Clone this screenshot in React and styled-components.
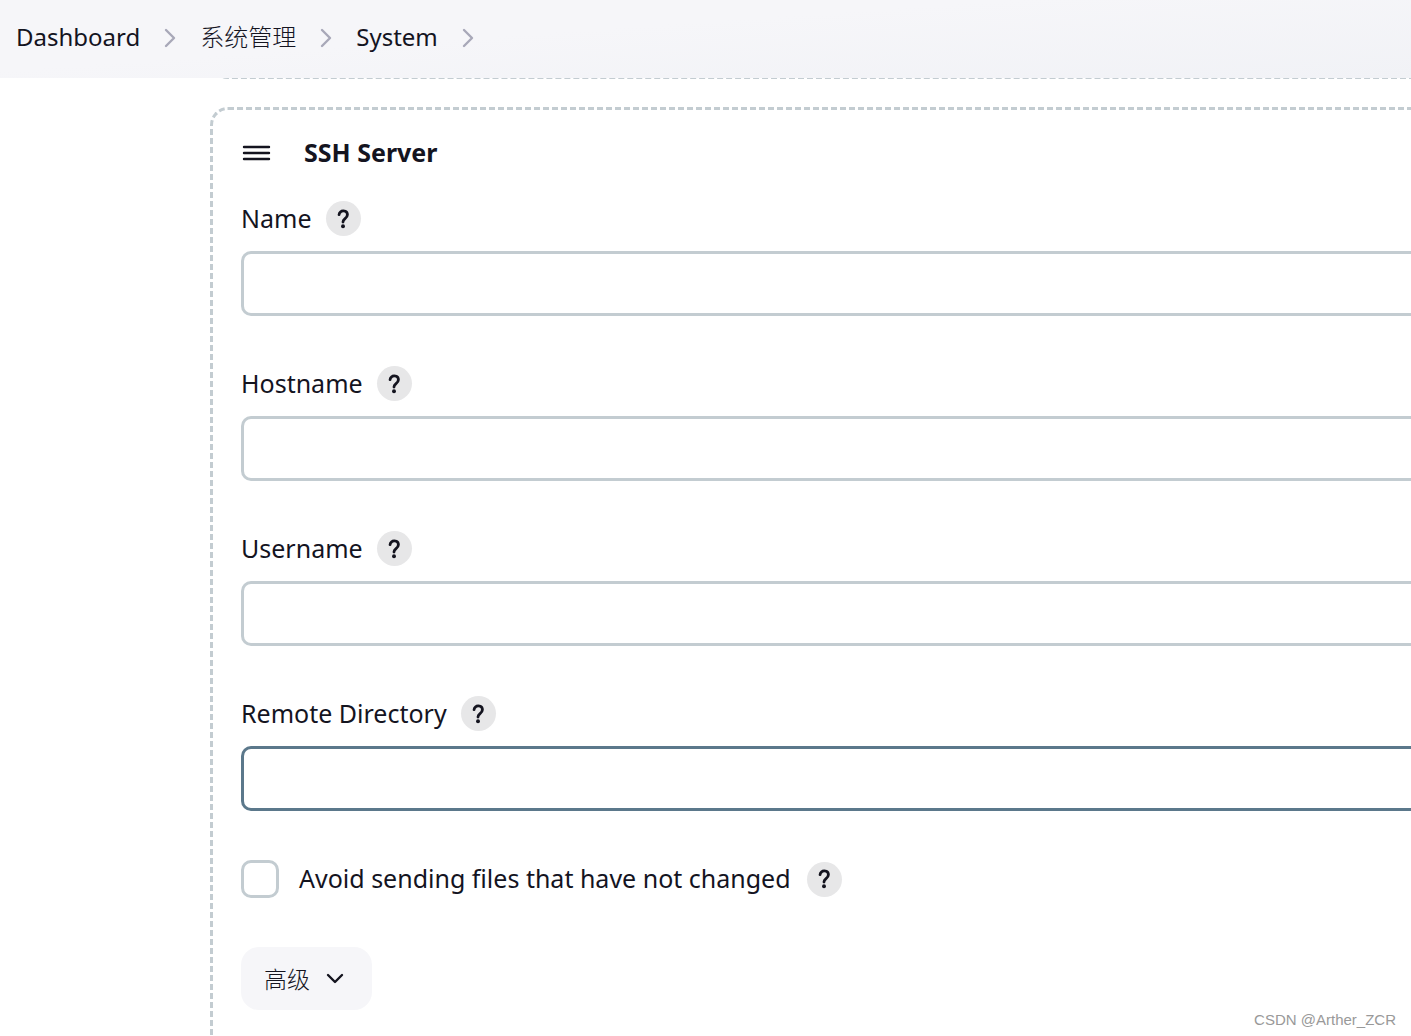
import React from "react";
import styled, { createGlobalStyle } from "styled-components";

const GlobalStyle = createGlobalStyle`
  *, *::before, *::after { box-sizing: border-box; }
  body {
    margin: 0;
    background: #fff;
    color: #14141f;
    font-family: "Noto Sans", "Noto Sans CJK SC", sans-serif;
    font-size: 25px;
    line-height: 36px;
  }
`;

const Page = styled.div`
  position: relative;
  display: flex;
  flex-direction: column;
  min-height: 100vh;
  overflow: hidden;
`;

const Breadcrumbs = styled.nav`
  position: relative;
  z-index: 1;
  display: flex;
  align-items: center;
  height: 78px;
  padding: 0 16px 4px;
  font-size: 24px;
  background: linear-gradient(176deg, #f6f6f9 40%, #f1f2f6);
`;

const Crumb = styled.a`
  color: inherit;
  font-weight: ${(p) => (p.lang === "zh" ? 300 : 400)};
  text-decoration: none;
`;

const CrumbArrow = styled.svg`
  width: 12px;
  height: 20px;
  margin: 2px 24px 0;
  flex: none;
`;

const Content = styled.main`
  flex: 1;
  display: flex;
  flex-direction: column;
  gap: 28px;
  margin-left: 210px;
`;

const Panel = styled.section`
  flex: 1;
  padding: 25px 0 24px 28px;
  border: 3px dashed #c3ccd1;
  border-width: 3px 0 0 3px;
  border-radius: 18px 0 0 0;
`;

const PreviousPanel = styled.div`
  height: 36px;
  margin-top: -35px;
  border: 3px dashed #c3ccd1;
  border-width: 0 0 3px 3px;
  border-radius: 0 0 0 18px;
`;

const PanelHeader = styled.header`
  display: flex;
  align-items: center;
  gap: 32px;
  height: 36px;
  margin-bottom: 30px;
`;

const DragHandle = styled.button`
  display: flex;
  padding: 0;
  border: 0;
  background: none;
  color: inherit;
`;

const Title = styled.h2`
  margin: 0;
  padding-bottom: 2px;
  font-size: 25px;
  font-weight: 700;
`;

const Field = styled.div`
  margin-bottom: 50px;
`;

const LabelRow = styled.div`
  display: flex;
  align-items: center;
  gap: 14px;
  height: 35px;
  margin-bottom: 15px;
`;

const LabelText = styled.span`
  display: block;
  padding-bottom: 2px;
`;

const HelpButton = styled.button`
  display: grid;
  place-items: center;
  width: 35px;
  height: 35px;
  padding: 0;
  border: 0;
  border-radius: 50%;
  background: #e7e7e8;
  color: #14141f;
`;

const TextInput = styled.input`
  display: block;
  width: 100%;
  height: 65px;
  padding: 0 16px;
  border: 3px solid ${(p) => (p.$active ? "#5b788b" : "#c3ccd1")};
  border-right: 0;
  border-radius: 10px 0 0 10px;
  background: #fff;
  color: inherit;
  font: inherit;
  outline: 0;
`;

const CheckRow = styled.div`
  display: flex;
  align-items: center;
  gap: 16px;
  height: 36px;
  margin-bottom: 50px;
`;

const CheckLabel = styled.label`
  display: flex;
  align-items: center;
  gap: 20px;
`;

const Checkbox = styled.input`
  appearance: none;
  width: 38px;
  height: 38px;
  margin: 0;
  border: 3px solid #c3ccd1;
  border-radius: 10px;
  background: #fff;
`;

const AdvancedButton = styled.button`
  display: flex;
  align-items: center;
  gap: 16px;
  height: 63px;
  padding: 0 28px 0 23px;
  border: 0;
  border-radius: 18px;
  background: #f6f6f9;
  color: inherit;
  font: inherit;
  font-size: 23px;
  font-weight: 300;
`;

const Watermark = styled.footer`
  position: absolute;
  right: 15px;
  bottom: 6px;
  color: #999;
  font-family: "Liberation Sans", sans-serif;
  font-size: 15px;
  line-height: 20px;
`;

const Arrow = () => (
  <CrumbArrow viewBox="0 0 12 20" aria-hidden="true">
    <path d="M2 2l8 8-8 8" fill="none" stroke="#a8a8b8" strokeWidth="2.4" strokeLinecap="round" strokeLinejoin="round" />
  </CrumbArrow>
);

const Help = ({ topic }) => (
  <HelpButton type="button" aria-label={`Help for ${topic}`}>
    <svg width="24" height="24" viewBox="-8 0 512 512" aria-hidden="true">
      <path
        d="M164 164s1.44-33 33.54-59.46C212.6 88.83 235.49 84.28 252 84c18.73-.23 35.47 2.94 45.48 7.82C314.59 100.2 342 120.6 342 164c0 45.67-26 66.37-55 89.18S248 298.36 248 320"
        fill="none"
        stroke="currentColor"
        strokeWidth="60"
        strokeLinecap="round"
        strokeLinejoin="round"
      />
      <circle cx="248" cy="412" r="42" fill="currentColor" />
    </svg>
  </HelpButton>
);

const crumbs = [
  { name: "Dashboard", lang: "en" },
  { name: "系统管理", lang: "zh" },
  { name: "System", lang: "en" },
];

const fields = [
  { id: "name", label: "Name" },
  { id: "hostname", label: "Hostname" },
  { id: "username", label: "Username" },
  { id: "remote-directory", label: "Remote Directory", active: true },
];

export default function App() {
  return (
    <Page>
      <GlobalStyle />
      <Breadcrumbs aria-label="Breadcrumb">
        {crumbs.map(({ name, lang }) => (
          <React.Fragment key={name}>
            <Crumb href="#" lang={lang}>{name}</Crumb>
            <Arrow />
          </React.Fragment>
        ))}
      </Breadcrumbs>
      <Content>
        <PreviousPanel />
        <Panel>
          <PanelHeader>
            <DragHandle type="button" aria-label="Reorder">
              <svg width="31" height="18" viewBox="0 0 31 18" aria-hidden="true">
                <path d="M3 3h25M3 9h25M3 15h25" stroke="currentColor" strokeWidth="2.4" strokeLinecap="round" />
              </svg>
            </DragHandle>
            <Title>SSH Server</Title>
          </PanelHeader>
          {fields.map(({ id, label, active }) => (
            <Field key={id}>
              <LabelRow>
                <label htmlFor={id}>
                  <LabelText>{label}</LabelText>
                </label>
                <Help topic={label} />
              </LabelRow>
              <TextInput id={id} type="text" $active={active} />
            </Field>
          ))}
          <CheckRow>
            <CheckLabel>
              <Checkbox type="checkbox" />
              <LabelText>Avoid sending files that have not changed</LabelText>
            </CheckLabel>
            <Help topic="avoiding unchanged files" />
          </CheckRow>
          <AdvancedButton type="button">
            高级
            <svg width="18" height="12" viewBox="0 0 18 12" aria-hidden="true">
              <path d="M2 2l7 7 7-7" fill="none" stroke="currentColor" strokeWidth="2.4" strokeLinecap="round" strokeLinejoin="round" />
            </svg>
          </AdvancedButton>
        </Panel>
      </Content>
      <Watermark>CSDN @Arther_ZCR</Watermark>
    </Page>
  );
}
